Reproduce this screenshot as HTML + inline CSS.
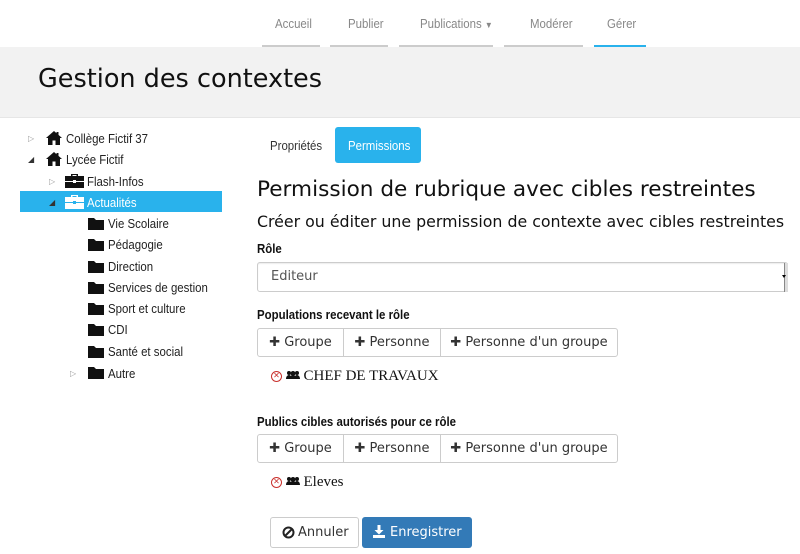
<!DOCTYPE html>
<html><head><meta charset="utf-8"><style>
*{box-sizing:border-box;margin:0;padding:0}
body{width:800px;height:554px;overflow:hidden;background:#fff;font-family:"Liberation Sans",sans-serif;position:relative;color:#222}
.abs{position:absolute;white-space:nowrap}
.nav{font-size:13px;color:#888;transform:scaleX(.88);transform-origin:left}
.ul{position:absolute;top:45px;height:2px;background:#ccc}
.band{position:absolute;left:0;top:47px;width:800px;height:71px;background:#f2f2f2;border-bottom:1px solid #e6e6e6}
.cond{font-size:13px;transform:scaleX(.88);transform-origin:left}
.dv{font-family:"DejaVu Sans",sans-serif}
.bg{position:absolute;height:29px;border:1px solid #ccc;border-radius:3px;display:flex;background:#fff}
.bg div{border-right:1px solid #ccc;font-family:"DejaVu Sans",sans-serif;font-size:13px;color:#333;display:flex;align-items:center;justify-content:center}
.bg div:last-child{border-right:none}
.x{display:inline-block;width:11px;height:11px;border:1.5px solid #c9302c;border-radius:50%;color:#c9302c;font-size:8px;line-height:8px;text-align:center;vertical-align:middle}
.tri{font-size:8px;color:#999}
.fold{position:absolute;left:88px;width:16px;height:13px}
svg{position:absolute}
</style></head><body>
<div class="abs nav" style="left:275px;top:16px">Accueil</div>
<div class="abs nav" style="left:348px;top:16px">Publier</div>
<div class="abs nav" style="left:420px;top:16px">Publications <span style="font-size:9px">▼</span></div>
<div class="abs nav" style="left:530px;top:16px">Modérer</div>
<div class="abs nav" style="left:607px;top:16px">Gérer</div>
<div class="ul" style="left:262px;width:58px"></div>
<div class="ul" style="left:330px;width:58px"></div>
<div class="ul" style="left:399px;width:94px"></div>
<div class="ul" style="left:504px;width:79px"></div>
<div class="ul" style="left:594px;width:52px;background:#29b2ec"></div>
<div class="band"></div>
<div class="abs dv" style="left:38px;top:64px;font-size:25.5px;color:#111">Gestion des contextes</div>

<div style="position:absolute;left:20px;top:191px;width:202px;height:21px;background:#29b2ec"></div>
<div class="abs tri" style="left:28px;top:134px">▷</div>
<svg style="left:46px;top:131px" width="16" height="14" viewBox="0 0 16 14"><path d="M8 0L0 7h2v7h4.5V9.5h3V14H14V7h2L12.5 3.9V1h-2v1.2z" fill="#111"/></svg>
<div class="abs cond" style="left:66px;top:131px">Collège Fictif 37</div>
<div class="abs tri" style="left:28px;top:155px;color:#333">◢</div>
<svg style="left:46px;top:152px" width="16" height="14" viewBox="0 0 16 14"><path d="M8 0L0 7h2v7h4.5V9.5h3V14H14V7h2L12.5 3.9V1h-2v1.2z" fill="#111"/></svg>
<div class="abs cond" style="left:66px;top:152px">Lycée Fictif</div>
<div class="abs tri" style="left:49px;top:177px">▷</div>
<svg style="left:65px;top:173px" width="19" height="15" viewBox="0 0 19 15"><path d="M6 3V1h7v2h-1.5V2h-4v1z M0 3h19v5H11v-1H8v1H0z M0 9h8v1h3V9h8v6H0z" fill="#111"/></svg>
<div class="abs cond" style="left:87px;top:174px">Flash-Infos</div>
<div class="abs tri" style="left:49px;top:198px;color:#333">◢</div>
<svg style="left:65px;top:194px" width="19" height="15" viewBox="0 0 19 15"><path d="M6 3V1h7v2h-1.5V2h-4v1z M0 3h19v5H11v-1H8v1H0z M0 9h8v1h3V9h8v6H0z" fill="#fff"/></svg>
<div class="abs cond" style="left:87px;top:195px;color:#fff">Actualités</div>
<svg class="fold" style="top:217px" viewBox="0 0 16 13"><path d="M0 1h6l2 2h8v10H0z" fill="#111"/></svg><div class="abs cond" style="left:108px;top:216px">Vie Scolaire</div>
<svg class="fold" style="top:238px" viewBox="0 0 16 13"><path d="M0 1h6l2 2h8v10H0z" fill="#111"/></svg><div class="abs cond" style="left:108px;top:237px">Pédagogie</div>
<svg class="fold" style="top:260px" viewBox="0 0 16 13"><path d="M0 1h6l2 2h8v10H0z" fill="#111"/></svg><div class="abs cond" style="left:108px;top:259px">Direction</div>
<svg class="fold" style="top:281px" viewBox="0 0 16 13"><path d="M0 1h6l2 2h8v10H0z" fill="#111"/></svg><div class="abs cond" style="left:108px;top:280px">Services de gestion</div>
<svg class="fold" style="top:302px" viewBox="0 0 16 13"><path d="M0 1h6l2 2h8v10H0z" fill="#111"/></svg><div class="abs cond" style="left:108px;top:301px">Sport et culture</div>
<svg class="fold" style="top:323px" viewBox="0 0 16 13"><path d="M0 1h6l2 2h8v10H0z" fill="#111"/></svg><div class="abs cond" style="left:108px;top:322px">CDI</div>
<svg class="fold" style="top:345px" viewBox="0 0 16 13"><path d="M0 1h6l2 2h8v10H0z" fill="#111"/></svg><div class="abs cond" style="left:108px;top:344px">Santé et social</div>
<div class="abs tri" style="left:70px;top:369px">▷</div>
<svg class="fold" style="top:366px" viewBox="0 0 16 13"><path d="M0 1h6l2 2h8v10H0z" fill="#111"/></svg><div class="abs cond" style="left:108px;top:366px">Autre</div>

<div class="abs cond" style="left:270px;top:138px;color:#333">Propriétés</div>
<div style="position:absolute;left:335px;top:127px;width:86px;height:36px;background:#29b2ec;border-radius:3px"></div>
<div class="abs cond" style="left:348px;top:138px;color:#fff">Permissions</div>
<div class="abs dv" style="left:257px;top:177px;font-size:21.6px;color:#111">Permission de rubrique avec cibles restreintes</div>
<div class="abs dv" style="left:257px;top:212px;font-size:15.8px;color:#111">Créer ou éditer une permission de contexte avec cibles restreintes</div>
<div class="abs cond" style="left:257px;top:241px;font-weight:bold;color:#111">Rôle</div>
<div style="position:absolute;left:257px;top:262px;width:531px;height:30px;border:1px solid #ccc;border-radius:3px;box-shadow:inset 0 1px 1px rgba(0,0,0,.08)"></div>
<div style="position:absolute;left:784px;top:263px;width:4px;height:29px;background:#ddd;border-left:1px solid #888"></div>
<div style="position:absolute;left:782px;top:275px;width:0;height:0;border-left:2px solid transparent;border-right:2px solid transparent;border-top:3px solid #000"></div>
<div class="abs dv" style="left:271px;top:269px;font-size:13px;color:#555">Editeur</div>
<div class="abs cond" style="left:257px;top:307px;font-weight:bold;color:#111">Populations recevant le rôle</div>
<div class="bg" style="left:257px;top:328px;width:361px"><div style="width:86px">✚&nbsp;Groupe</div><div style="width:97px">✚&nbsp;Personne</div><div style="flex:1">✚&nbsp;Personne d'un groupe</div></div>
<div class="abs" style="left:271px;top:368px;font-family:'Liberation Serif',serif;font-size:15px;color:#111"><span class="x">✕</span> <svg style="position:static;vertical-align:-1px" width="14" height="11" viewBox="0 0 14 11"><circle cx="3" cy="3" r="2" fill="#111"/><circle cx="11" cy="3" r="2" fill="#111"/><circle cx="7" cy="3.5" r="2.5" fill="#111"/><path d="M0 9c0-3 2-4 3-4s2 1 2 1 1-1 2-1 2 1 2 1 1-1 2-1 3 1 3 4z" fill="#111"/></svg> CHEF DE TRAVAUX</div>
<div class="abs cond" style="left:257px;top:414px;font-weight:bold;color:#111">Publics cibles autorisés pour ce rôle</div>
<div class="bg" style="left:257px;top:434px;width:361px"><div style="width:86px">✚&nbsp;Groupe</div><div style="width:97px">✚&nbsp;Personne</div><div style="flex:1">✚&nbsp;Personne d'un groupe</div></div>
<div class="abs" style="left:271px;top:474px;font-family:'Liberation Serif',serif;font-size:15px;color:#111"><span class="x">✕</span> <svg style="position:static;vertical-align:-1px" width="14" height="11" viewBox="0 0 14 11"><circle cx="3" cy="3" r="2" fill="#111"/><circle cx="11" cy="3" r="2" fill="#111"/><circle cx="7" cy="3.5" r="2.5" fill="#111"/><path d="M0 9c0-3 2-4 3-4s2 1 2 1 1-1 2-1 2 1 2 1 1-1 2-1 3 1 3 4z" fill="#111"/></svg> Eleves</div>
<div style="position:absolute;left:270px;top:517px;width:89px;height:31px;border:1px solid #ccc;border-radius:3px"></div>
<svg style="left:282px;top:526px" width="13" height="13" viewBox="0 0 13 13"><circle cx="6.5" cy="6.5" r="5" fill="none" stroke="#222" stroke-width="2"/><path d="M3 10L10 3" stroke="#222" stroke-width="2"/></svg>
<div class="abs dv" style="left:298px;top:525px;font-size:13px;color:#333">Annuler</div>
<div style="position:absolute;left:362px;top:517px;width:110px;height:31px;background:#337ab7;border-radius:3px"></div>
<svg style="left:373px;top:525px" width="12" height="13" viewBox="0 0 12 13"><path d="M4.5 0h3v5h3L6 9.5 1.5 5h3z M0 10h12v3H0z" fill="#fff"/></svg>
<div class="abs dv" style="left:390px;top:525px;font-size:13px;color:#fff">Enregistrer</div>
</body></html>
